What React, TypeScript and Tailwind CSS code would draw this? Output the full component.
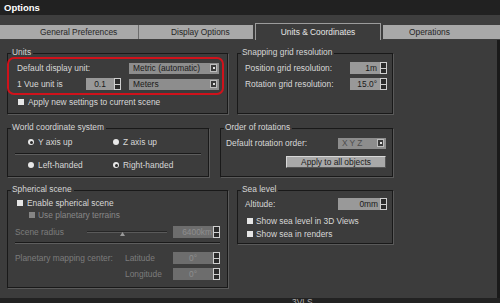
import React from "react";

function Spin() {
  return (
    <div className="w-[7px] h-full border border-[#cfcfcf] bg-[#2b2b2b] flex flex-col shrink-0">
      <div className="flex-1 border-b border-[#cfcfcf]" />
      <div className="flex-1" />
    </div>
  );
}

function Drop() {
  return (
    <div className="w-[7px] h-[8px] border border-[#bdbdbd] bg-[#3a3a3a] flex items-center justify-center shrink-0">
      <div className="w-[2px] h-[2px] bg-[#e0e0e0]" />
    </div>
  );
}

function Select({ text, className }: { text: React.ReactNode; className: string }) {
  return (
    <div className={`h-[11px] bg-[#8d8d8d] flex items-center justify-between pl-[4px] pr-[2px] text-[#1b1b1b] shrink-0 ${className}`}>
      <span className="whitespace-nowrap">{text}</span>
      <Drop />
    </div>
  );
}

function Num({
  value,
  w,
  align,
  disabled,
}: {
  value: string;
  w: string;
  align: string;
  disabled?: boolean;
}) {
  return (
    <div className="flex h-[12px] shrink-0">
      <div
        className={`${w} h-full flex items-center ${align} ${
          disabled ? "bg-[#6d6d6d] text-[#8e8e8e]" : "bg-[#999999] text-[#1a1a1a]"
        }`}
      >
        {value}
      </div>
      <Spin />
    </div>
  );
}

function Check({ disabled }: { disabled?: boolean }) {
  return <span className={`w-[6px] h-[6px] shrink-0 ${disabled ? "bg-[#858585]" : "bg-[#e6e6e6]"}`} />;
}

function Radio({ sel, label }: { sel?: boolean; label: string }) {
  return (
    <div className="flex items-center gap-[4px]">
      <span className="w-[6px] h-[6px] rounded-full bg-[#e8e8e8] flex items-center justify-center shrink-0">
        {sel && <span className="w-[3px] h-[3px] rounded-full bg-[#2a2a2a]" />}
      </span>
      <span className="whitespace-nowrap">{label}</span>
    </div>
  );
}

function Sep({ className }: { className: string }) {
  return <div className={`h-[2px] border-t border-t-[#1a1a1a] border-b border-b-[#5e5e5e] ${className}`} />;
}

function Group({
  label,
  className,
  children,
}: {
  label: string;
  className: string;
  children: React.ReactNode;
}) {
  return (
    <div className={`relative border border-[#191919] shadow-[1px_1px_0_#5a5a5a] shrink-0 ${className}`}>
      <span className="absolute left-[3px] top-[-7px] bg-[#3c3c3c] pl-[1px] pr-[2px] leading-[10px] text-[#d6d6d6] whitespace-nowrap">
        {label}
      </span>
      {children}
    </div>
  );
}

export default function App() {
  return (
    <div className="w-[500px] h-[303px] overflow-hidden bg-[#3c3c3c] flex flex-col font-['Liberation_Sans',Arial,sans-serif] text-[8.4px] leading-[10px] text-[#d8d8d8]">
      {/* title bar */}
      <div className="h-[15px] bg-[#212121] flex items-center pl-[4px] shrink-0">
        <span className="text-[9.5px] font-bold text-white leading-[12px]">Options</span>
      </div>
      <div className="h-[9px] bg-[#3e3e3e] shrink-0" />
      {/* tabs */}
      <div className="h-[16px] bg-[#3e3e3e] flex shrink-0">
        <div className="w-[138px] mt-[1px] h-[14px] bg-[#a8a8a8] text-[#262626] pl-[40px] flex items-center whitespace-nowrap">
          General Preferences
        </div>
        <div className="w-[1px] mt-[1px] h-[14px] bg-[#6c6c6c]" />
        <div className="w-[114px] mt-[1px] h-[14px] bg-[#a8a8a8] text-[#262626] pl-[32px] flex items-center whitespace-nowrap">
          Display Options
        </div>
        <div className="w-[2px]" />
        <div className="w-[126px] -mt-[1px] h-[17px] bg-[#3c3c3c] border-t border-l border-r border-[#9c9c9c] text-[#e6e6e6] flex items-center justify-center whitespace-nowrap">
          Units &amp; Coordinates
        </div>
        <div className="w-[2px]" />
        <div className="flex-1 mt-[1px] h-[14px] bg-[#a8a8a8] text-[#262626] pl-[26px] flex items-center">
          Operations
        </div>
      </div>

      {/* body */}
      <div className="flex-1 flex min-h-0">
        <div className="flex-1 flex flex-col pl-[7px] pt-[13px]">
          {/* row 1 */}
          <div className="flex gap-[9px]">
            <Group label="Units" className="w-[221px] h-[61px]">
              <div className="-ml-[1px] mt-[3px] w-[217px] h-[38px] border-2 border-[#d0121b] rounded-[7px] pl-[8px] pr-[3px] pt-[3px] flex flex-col gap-[4px]">
                <div className="h-[12px] flex items-center justify-between">
                  <span className="whitespace-nowrap">Default display unit:</span>
                  <Select text="Metric (automatic)" className="w-[90px]" />
                </div>
                <div className="h-[12px] flex items-center">
                  <span className="w-[69px] whitespace-nowrap">1 Vue unit is</span>
                  <Num value="0.1" w="w-[28px]" align="justify-center" />
                  <div className="w-[8px]" />
                  <Select text="Meters" className="w-[90px]" />
                </div>
              </div>
              <div className="mt-[2px] h-[10px] flex items-center pl-[10px] gap-[4px]">
                <Check />
                <span className="whitespace-nowrap">Apply new settings to current scene</span>
              </div>
            </Group>
            <Group label="Snapping grid resolution" className="w-[156px] h-[61px]">
              <div className="pt-[8px] pl-[7px] pr-[5px] flex flex-col gap-[4px]">
                <div className="h-[12px] flex items-center justify-between">
                  <span className="whitespace-nowrap">Position grid resolution:</span>
                  <Num value="1m" w="w-[30px]" align="justify-end pr-[3px]" />
                </div>
                <div className="h-[12px] flex items-center justify-between">
                  <span className="whitespace-nowrap">Rotation grid resolution:</span>
                  <Num value="15.0°" w="w-[30px]" align="justify-end pr-[3px]" />
                </div>
              </div>
            </Group>
          </div>

          {/* row 2 */}
          <div className="flex gap-[11px] mt-[14px]">
            <Group label="World coordinate system" className="w-[202px] h-[49px]">
              <div className="pt-[7px]">
                <div className="h-[12px] grid grid-cols-[85px_1fr] pl-[20px] items-center">
                  <Radio sel label="Y axis up" />
                  <Radio label="Z axis up" />
                </div>
                <Sep className="mx-[7px] mt-[5px]" />
                <div className="mt-[4px] h-[12px] grid grid-cols-[85px_1fr] pl-[20px] items-center">
                  <Radio label="Left-handed" />
                  <Radio sel label="Right-handed" />
                </div>
              </div>
            </Group>
            <Group label="Order of rotations" className="w-[173px] h-[49px]">
              <div className="pt-[8px] pl-[5px] pr-[6px]">
                <div className="h-[12px] flex items-center justify-between">
                  <span className="whitespace-nowrap">Default rotation order:</span>
                  <Select
                    text={<span className="tracking-[2px] text-[#4e4e4e]">XYZ</span>}
                    className="w-[48px]"
                  />
                </div>
                <div className="mt-[7px] flex justify-end">
                  <button className="w-[100px] h-[12px] bg-[#a9a9a9] text-[#1a1a1a] border-t border-l border-t-[#d8d8d8] border-l-[#d8d8d8] border-b border-r border-b-[#555555] border-r-[#555555] flex items-center justify-center leading-[10px] whitespace-nowrap">
                    Apply to all objects
                  </button>
                </div>
              </div>
            </Group>
          </div>

          {/* row 3 */}
          <div className="flex gap-[9px] mt-[13px] items-start">
            <Group label="Spherical scene" className="w-[221px] h-[98px]">
              <div className="pt-[7px]">
                <div className="h-[10px] flex items-center pl-[9px] gap-[4px]">
                  <Check />
                  <span className="whitespace-nowrap">Enable spherical scene</span>
                </div>
                <div className="mt-[2px] h-[10px] flex items-center pl-[21px] gap-[3px] text-[#888888]">
                  <Check disabled />
                  <span className="whitespace-nowrap">Use planetary terrains</span>
                </div>
                <div className="mt-[6px] h-[12px] flex items-center pl-[7px] text-[#7c7c7c]">
                  <span className="w-[72px] whitespace-nowrap">Scene radius</span>
                  <div className="relative w-[80px] h-[12px] flex items-center">
                    <div className="w-full h-[2px] border-t border-t-[#262626] border-b border-b-[#5a5a5a]" />
                    <svg className="absolute left-[33px] top-[6px]" width="5" height="4" viewBox="0 0 5 4">
                      <path d="M2.5 0 L5 4 L0 4Z" fill="#9a9a9a" />
                    </svg>
                  </div>
                  <div className="w-[6px]" />
                  <Num value="6400km" w="w-[40px]" align="justify-end pr-[1px]" disabled />
                </div>
                <Sep className="mx-[7px] mt-[4px]" />
                <div className="mt-[8px] grid grid-cols-[110px_48px_auto] gap-y-[4px] pl-[7px] items-center text-[#7c7c7c]">
                  <span className="whitespace-nowrap">Planetary mapping center:</span>
                  <span>Latitude</span>
                  <Num value="0°" w="w-[40px]" align="justify-center" disabled />
                  <span />
                  <span>Longitude</span>
                  <Num value="0°" w="w-[40px]" align="justify-center" disabled />
                </div>
              </div>
            </Group>
            <Group label="Sea level" className="w-[156px] h-[54px]">
              <div className="pt-[7px] pl-[7px] pr-[5px]">
                <div className="h-[12px] flex items-center justify-between">
                  <span>Altitude:</span>
                  <Num value="0mm" w="w-[42px]" align="justify-end pr-[2px]" />
                </div>
                <div className="mt-[6px] h-[10px] flex items-center pl-[2px] gap-[3px]">
                  <Check />
                  <span className="whitespace-nowrap">Show sea level in 3D Views</span>
                </div>
                <div className="mt-[3px] h-[10px] flex items-center pl-[2px] gap-[3px]">
                  <Check />
                  <span className="whitespace-nowrap">Show sea in renders</span>
                </div>
              </div>
            </Group>
          </div>
        </div>
        <div className="w-[3px] bg-[#1a1a1a]" />
      </div>

      {/* bottom strip */}
      <div className="h-[5px] bg-[#222222] overflow-hidden shrink-0 pl-[292px]">
        <span className="block leading-[10px] -mt-[1px] text-[#b0b0b0]">3VLS</span>
      </div>
    </div>
  );
}
